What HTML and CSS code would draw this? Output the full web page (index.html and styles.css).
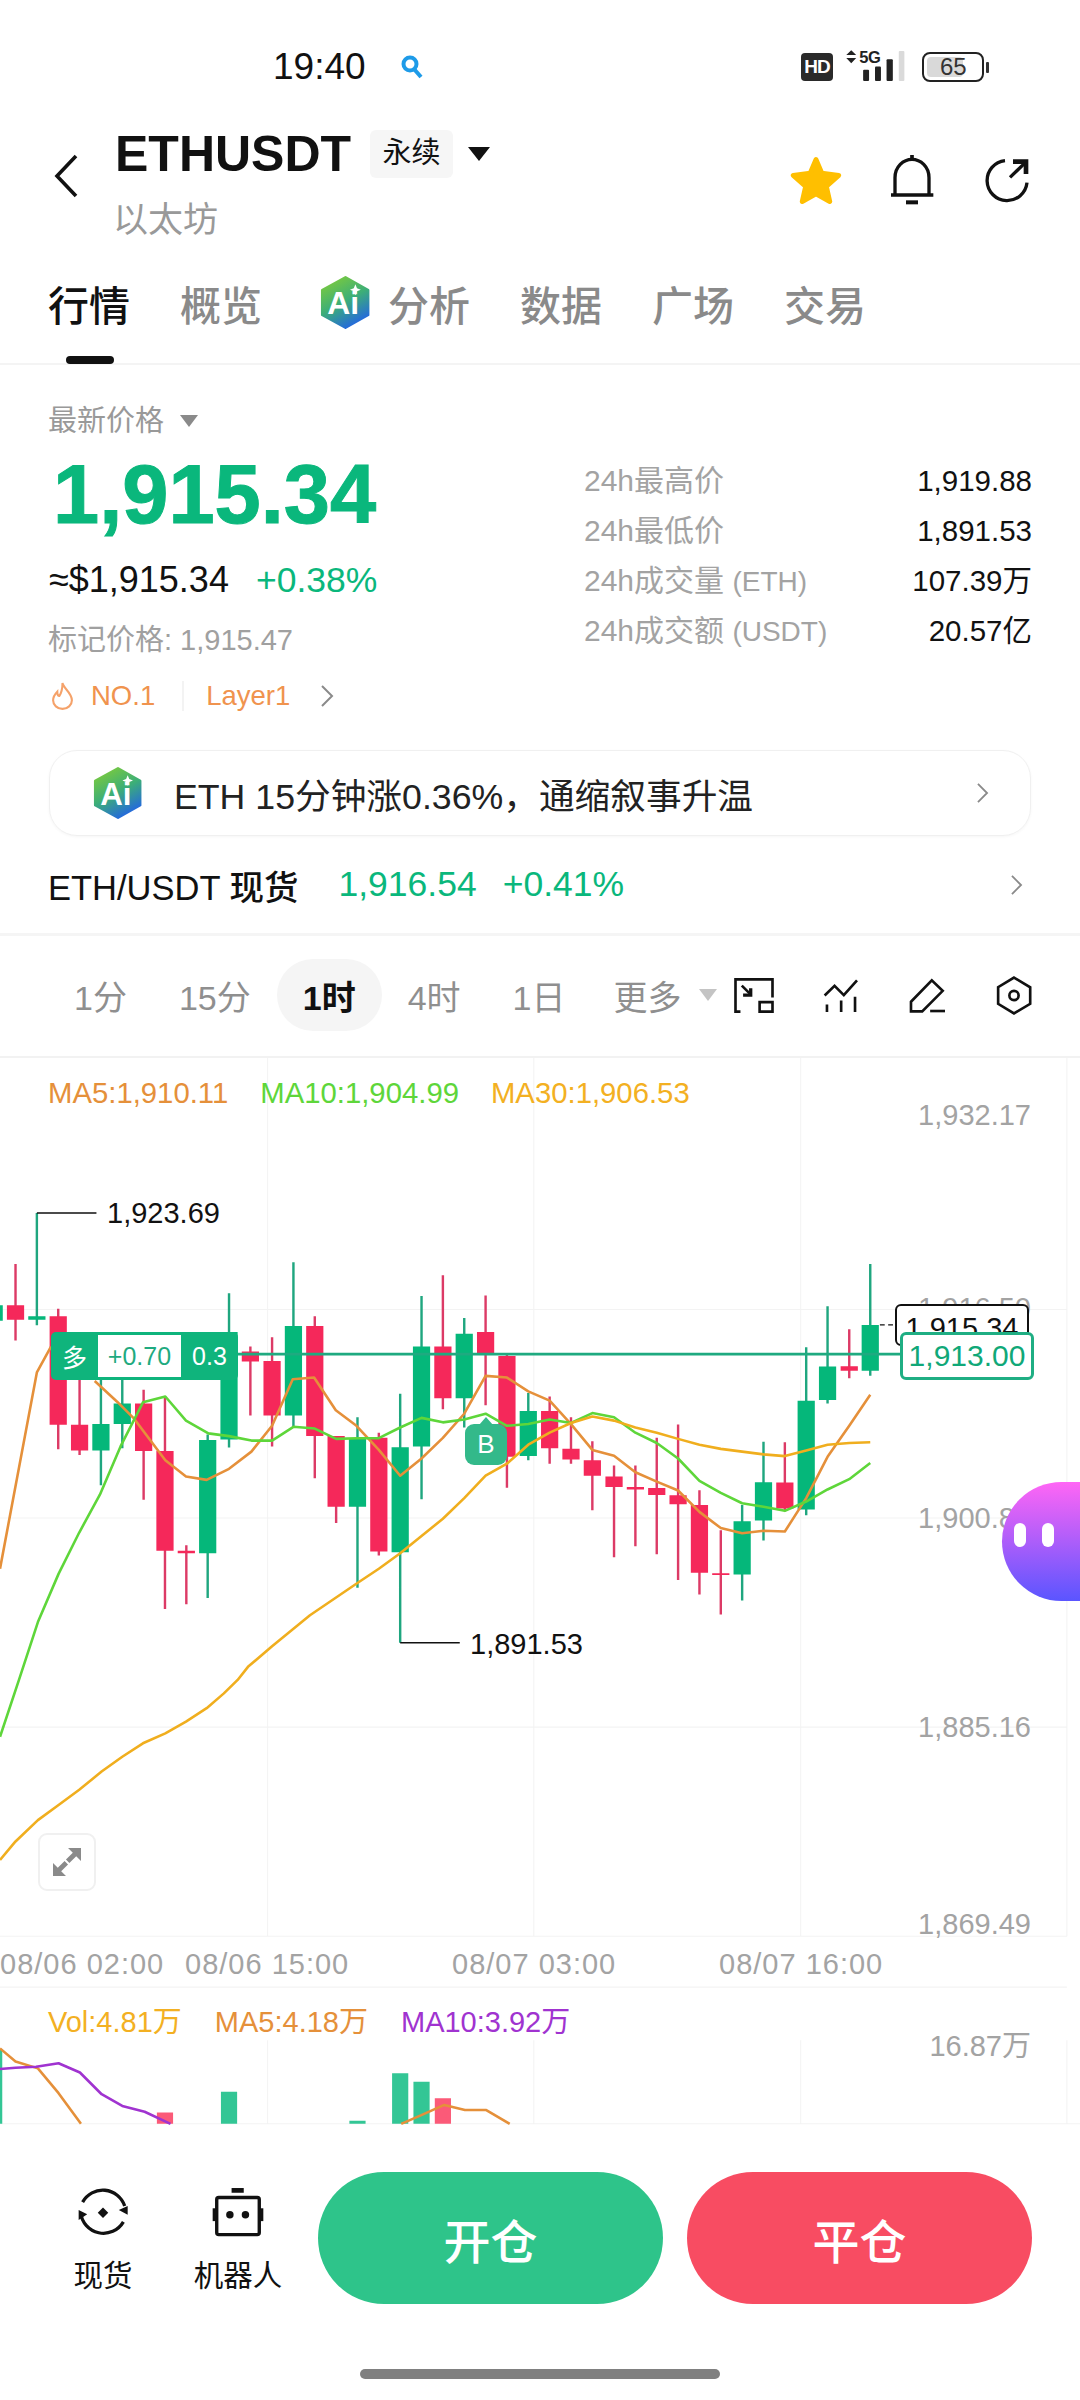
FILE: index.html
```html
<!DOCTYPE html>
<html lang="zh-CN">
<head>
  <meta charset="UTF-8">
  <meta name="viewport" content="width=device-width, initial-scale=1.0">
  <title>ETHUSDT 永续</title>
  <link rel="stylesheet" href="styles.css">
</head>
<body>

  <svg class="defs" width="0" height="0">
    <defs>
      <linearGradient id="aiGrad" x1="0.2" y1="0" x2="0.7" y2="1">
        <stop offset="0" stop-color="#7ccb3c"/>
        <stop offset="0.5" stop-color="#3cae78"/>
        <stop offset="1" stop-color="#2263e6"/>
      </linearGradient>
      <symbol id="aiLogo" viewBox="25 15 160 172">
        <path d="M105 22 176 62V140L105 180 32 140V62Z" fill="url(#aiGrad)" stroke="url(#aiGrad)" stroke-width="8" stroke-linejoin="round"/>
        <text x="98" y="138" class="ai-text">Ai</text>
        <path d="M136 44 141 56 153 61 141 66 136 78 131 66 119 61 131 56Z" fill="#fff"/>
      </symbol>
      <symbol id="chevron" viewBox="0 0 14 22">
        <path d="M2 1 12 11 2 21" fill="none" stroke="#8a8a8a" stroke-width="2"/>
      </symbol>
    </defs>
  </svg>

  <div class="status-bar">
    <span class="clock">19:40</span>
    <svg class="status-search" viewBox="0 0 24 24">
      <circle cx="10" cy="9" r="6.5" fill="none" stroke="#1e9be8" stroke-width="4"/>
      <path d="M14 14 21 22" stroke="#1e9be8" stroke-width="4"/>
    </svg>
    <div class="status-right">
      <span class="hd-badge">HD</span>
      <svg class="signal" viewBox="197 20 177 106">
        <path d="M212 33 227 47H197ZM212 72 197 56H227Z" fill="#222"/>
        <text x="236" y="72" class="signal-text">5G</text>
        <rect x="248" y="92" width="18" height="34" rx="3" fill="#222"/>
        <rect x="284" y="82" width="18" height="44" rx="3" fill="#222"/>
        <rect x="319" y="60" width="19" height="66" rx="3" fill="#222"/>
        <rect x="356" y="35" width="17" height="91" rx="3" fill="#dadada"/>
      </svg>
      <div class="battery">
        <span class="battery-level"></span>
        <span class="battery-num">65</span>
      </div>
      <span class="battery-tip"></span>
    </div>
  </div>

  <div class="header">
    <svg class="back" viewBox="0 0 24 44">
      <path d="M22 2 3 22 22 42" fill="none" stroke="#111" stroke-width="3.6"/>
    </svg>
    <div class="title-block">
      <div class="title-row">
        <span class="symbol">ETHUSDT</span>
        <span class="contract-tag">永续</span>
        <span class="title-caret"></span>
      </div>
      <div class="coin-name">以太坊</div>
    </div>
    <div class="header-actions">
      <svg class="icon-star" viewBox="33 342 150 142">
        <path d="M108 352 125 392 174 398 138 430 148 474 108 452 68 474 78 430 42 398 91 392Z" fill="#ffbf00" stroke="#ffbf00" stroke-width="14" stroke-linejoin="round"/>
      </svg>
      <svg class="icon-bell" viewBox="332 337 128 150">
        <path d="M345 457V405C345 372 370 350 396 350S447 372 447 405V457" fill="none" stroke="#111" stroke-width="10"/>
        <path d="M396 337V352M333 457H460" stroke="#111" stroke-width="11"/>
        <rect x="378" y="473" width="36" height="12" fill="#111"/>
      </svg>
      <svg class="icon-share" viewBox="615 350 138 135">
        <path d="M678 358A60 60 0 1 0 744 424" fill="none" stroke="#111" stroke-width="10"/>
        <path d="M693 408 742 361" fill="none" stroke="#111" stroke-width="10"/>
        <path d="M702 354H748V398L734 398V368H702Z" fill="#111"/>
      </svg>
    </div>
  </div>

  <div class="tabs">
    <span class="tab tab-active">行情</span>
    <span class="tab">概览</span>
    <span class="tab tab-ai"><svg class="ai-icon"><use href="#aiLogo"/></svg>分析</span>
    <span class="tab">数据</span>
    <span class="tab">广场</span>
    <span class="tab">交易</span>
  </div>

  <div class="quote">
    <div class="quote-left">
      <div class="last-label">最新价格<span class="small-caret"></span></div>
      <div class="last-price">1,915.34</div>
      <div class="fiat-row">
        <span class="fiat">≈$1,915.34</span>
        <span class="change">+0.38%</span>
      </div>
      <div class="mark-price">标记价格: 1,915.47</div>
      <div class="rank-row">
        <svg class="fire" viewBox="0 0 22 26" preserveAspectRatio="none">
          <path d="M11 1C12 6 20 10 20 17A9 8 0 0 1 2 17C2 13 4 11 6 9 6 12 7 13 8 13 10 10 11 6 11 1Z" fill="none" stroke="#f5a26a" stroke-width="2"/>
        </svg>
        <span class="rank">NO.1</span>
        <span class="rank-sep"></span>
        <span class="rank rank-layer">Layer1</span>
        <svg class="rank-chevron"><use href="#chevron"/></svg>
      </div>
    </div>
    <div class="stats">
      <div class="stat"><span class="stat-label">24h最高价</span><span class="stat-value">1,919.88</span></div>
      <div class="stat"><span class="stat-label">24h最低价</span><span class="stat-value">1,891.53</span></div>
      <div class="stat"><span class="stat-label">24h成交量 <small>(ETH)</small></span><span class="stat-value">107.39万</span></div>
      <div class="stat"><span class="stat-label">24h成交额 <small>(USDT)</small></span><span class="stat-value">20.57亿</span></div>
    </div>
  </div>

  <div class="ai-card">
    <svg class="ai-card-icon"><use href="#aiLogo"/></svg>
    <span class="ai-card-text">ETH 15分钟涨0.36%，通缩叙事升温</span>
    <svg class="card-chevron"><use href="#chevron"/></svg>
  </div>

  <div class="spot-row">
    <span class="spot-name">ETH/USDT 现货</span>
    <span class="spot-price">1,916.54</span>
    <span class="spot-price spot-change">+0.41%</span>
    <svg class="spot-chevron"><use href="#chevron"/></svg>
  </div>

  <div class="toolbar">
    <span class="interval">1分</span>
    <span class="interval">15分</span>
    <span class="interval interval-active">1时</span>
    <span class="interval">4时</span>
    <span class="interval">1日</span>
    <span class="interval interval-more">更多<i class="more-caret"></i></span>
    <div class="tools">
      <svg class="tool tool-frame" viewBox="36 38 126 112">
        <path d="M58 143H43V45H155V100M155 143H116V114H155V143Z" fill="none" stroke="#111" stroke-width="8"/>
        <path d="M62 64 88 90" stroke="#111" stroke-width="8"/>
        <path d="M94 72V98H66V88H84V72Z" fill="#111"/>
      </svg>
      <svg class="tool tool-index" viewBox="303 40 110 106">
        <path d="M310 93 340 64 368 92 408 47" fill="none" stroke="#111" stroke-width="8"/>
        <path d="M317 120V143M360 108V143M402 97V143" stroke="#111" stroke-width="8"/>
      </svg>
      <svg class="tool tool-pencil" viewBox="566 38 112 106">
        <path d="M572 110 635 45 668 77 606 139H572Z" fill="none" stroke="#111" stroke-width="8"/>
        <path d="M630 138H675" stroke="#111" stroke-width="8"/>
      </svg>
      <svg class="tool tool-gear" viewBox="828 37 108 118">
        <path d="M882 42 931 71V121L882 150 834 121V71Z" fill="none" stroke="#111" stroke-width="8"/>
        <circle cx="882" cy="96" r="14" fill="none" stroke="#111" stroke-width="8"/>
      </svg>
    </div>
  </div>

  <div class="chart">
    <svg class="plot" viewBox="0 -238 3136 3110">
      <path class="grid" d="M777 -238V2312M1550 -238V2312M2325 -238V2312M3098 -238V2312M0 492H3098M0 1098H3098M0 1705H3098M0 2312H3098M0 2460H3098M777 2614V2857M1550 2614V2857M2325 2614V2857M3098 2614V2857M0 2857H3136"/>

      <path class="wick-red" d="M45 360V582M169 490V898M231 650V915M417 725V1045M479 745V1362M541 1177V1348M727 600V800M790 573V890M914 512V982M976 860V1112M1100 850V1207M1286 393V782M1410 452V770M1472 620V1010M1596 745V940M1658 805V940M1720 875V1075M1783 945V1212M1845 945V1180M1907 865V1203M1969 826V1278M2031 1017V1320M2093 1133V1378M2279 878V1078M2466 550V692"/>
      <path class="body-red" d="M45 480V522M169 512V827M231 827V902M417 765V903M479 903V1193M541 1193V1200M727 614V643M790 642V800M914 540V860M976 860V1065M1100 865V1195M1286 600V750M1410 558V620M1472 627V920M1596 787V895M1658 897V928M1720 930V975M1783 977V1008M1845 1008V1015M1907 1011V1031M1969 1032V1058M2031 1060V1257M2093 1258V1263M2279 995V1070M2466 657V670"/>
      <path class="wick-green" d="M107 212V538M293 690V1003M355 690V895M603 855V1330M665 445V893M852 355V835M1038 805V1300M1162 737V1460M1224 453V1043M1348 517V835M1534 735V930M2155 1060V1337M2217 876V1163M2341 602V1090M2403 483V765M2527 360V685"/>
      <path class="body-green" d="M-17 480V525M107 512V522M293 825V902M355 765V825M603 871V1200M665 558V870M852 540V800M1038 868V1065M1162 892V1197M1224 600V890M1348 563V750M1534 787V918M2155 1107V1262M2217 994V1105M2341 757V1073M2403 658V755M2527 537V670"/>

      <path class="order-line" d="M690 622H2640"/>
      <path class="peak-line" d="M107 212H280M1162 1460H1335"/>
      <path class="last-dash" d="M2555 537H2610"/>

      <path class="ma ma5" d="M0 1245 107 675 148 600M275 700 340 760 390 810 480 930 540 977 600 987 665 955 730 905 790 830 850 695 912 690 975 785 1035 830 1100 900 1162 975 1224 925 1286 865 1348 795 1410 685 1472 690 1534 730 1596 757 1658 825 1720 900 1783 917 1845 965 1907 992 1969 1018 2031 1080 2093 1127 2155 1142 2217 1135 2279 1137 2341 1040 2403 920 2466 830 2527 740"/>
      <path class="ma ma10" d="M0 1733 55 1568 110 1400 170 1260 230 1140 290 1030 350 890 415 762 480 745 540 815 605 852 665 860 730 873 790 873 852 833 914 838 976 868 1038 866 1100 866 1162 835 1224 807 1286 820 1348 812 1410 795 1472 830 1534 825 1596 812 1658 822 1720 793 1783 805 1845 850 1907 880 1969 925 2031 990 2093 1025 2155 1055 2217 1065 2279 1077 2341 1050 2403 1015 2466 985 2527 938"/>
      <path class="ma ma30" d="M0 2091 45 2037 110 1975 170 1931 230 1887 295 1834 355 1791 415 1752 480 1723 540 1689 600 1650 650 1607 690 1568 720 1530 790 1470 900 1380 1040 1285 1100 1245 1162 1200 1224 1150 1286 1100 1348 1040 1410 975 1472 940 1534 885 1596 850 1658 822 1720 803 1783 815 1845 835 1907 850 1969 868 2031 885 2093 897 2155 905 2217 913 2279 918 2341 902 2403 885 2466 880 2527 878"/>

      <path class="vol-green" d="M-17 2642V2857M665 2764V2857M1038 2848V2857M1162 2710V2857M1224 2735V2857"/>
      <path class="vol-red" d="M479 2824V2857M1286 2783V2857"/>
      <path class="ma vol-ma5" d="M0 2638 45 2676 110 2696 170 2768 235 2857M1165 2857 1225 2831 1290 2802 1350 2817 1412 2817 1480 2857"/>
      <path class="ma vol-ma10" d="M0 2698 45 2694 105 2691 170 2681 232 2708 295 2771 355 2805 420 2822 495 2857"/>
    </svg>

    <div class="ma-legend">
      <span class="leg-ma5">MA5:1,910.11</span>
      <span class="leg-ma10">MA10:1,904.99</span>
      <span class="leg-ma30">MA30:1,906.53</span>
    </div>

    <span class="axis-label axis-1">1,932.17</span>
    <span class="axis-label axis-2">1,916.50</span>
    <span class="axis-label axis-3">1,900.83</span>
    <span class="axis-label axis-4">1,885.16</span>
    <span class="axis-label axis-5">1,869.49</span>

    <span class="peak-label peak-high">1,923.69</span>
    <span class="peak-label peak-low">1,891.53</span>

    <div class="order-tag">
      <span class="order-side">多</span>
      <span class="order-pnl">+0.70</span>
      <span class="order-qty">0.3</span>
    </div>

    <div class="buy-mark">B</div>

    <span class="price-tag">1,915.34</span>
    <span class="order-price">1,913.00</span>

    <div class="assistant"><i></i><i></i></div>

    <div class="expand">
      <svg viewBox="150 505 82 82">
        <path d="M232 505V543L218 529 198 549 188 539 208 519 194 505ZM150 587V549L164 563 184 543 194 553 174 573 188 587Z" fill="#8a8a8a"/>
      </svg>
    </div>

    <div class="time-axis">
      <span class="time-1">08/06 02:00</span>
      <span class="time-2">08/06 15:00</span>
      <span class="time-3">08/07 03:00</span>
      <span class="time-4">08/07 16:00</span>
    </div>

    <div class="vol-legend">
      <span class="leg-ma30">Vol:4.81万</span>
      <span class="leg-ma5">MA5:4.18万</span>
      <span class="leg-vol10">MA10:3.92万</span>
    </div>
    <span class="axis-label axis-vol">16.87万</span>
  </div>

  <div class="bottom-bar">
    <div class="bottom-row">
      <div class="nav-item nav-spot">
        <svg class="nav-icon" viewBox="52 42 152 152">
          <path d="M66 88A70 70 0 0 1 194 100" fill="none" stroke="#111" stroke-width="10"/>
          <path d="M190 148A70 70 0 0 1 60 120" fill="none" stroke="#111" stroke-width="10"/>
          <path d="M176 112 203 100V126ZM54 112 80 125 54 142Z" fill="#111"/>
          <path d="M128 104 144 120 128 136 112 120Z" fill="#111"/>
        </svg>
        <span class="nav-label">现货</span>
      </div>
      <div class="nav-item nav-bot">
        <svg class="nav-icon" viewBox="458 46 154 146">
          <rect x="472" y="76" width="126" height="110" rx="6" fill="none" stroke="#111" stroke-width="10"/>
          <rect x="460" y="108" width="12" height="38" fill="#111"/>
          <rect x="598" y="108" width="12" height="38" fill="#111"/>
          <rect x="516" y="48" width="36" height="14" fill="#111"/>
          <circle cx="511" cy="127" r="11" fill="#111"/>
          <circle cx="557" cy="127" r="11" fill="#111"/>
        </svg>
        <span class="nav-label">机器人</span>
      </div>
      <button class="trade-btn btn-open">开仓</button>
      <button class="trade-btn btn-close">平仓</button>
    </div>
    <div class="home-bar"></div>
  </div>

</body>
</html>
```

FILE: styles.css
```css
* {
  box-sizing: border-box;
}

body {
  margin: 0;
  width: 1080px;
  height: 2400px;
  overflow: hidden;
  background-color: #fff;
  color: #111;
  font-family: "Liberation Sans", "Noto Sans CJK SC", sans-serif;
}

.defs {
  position: absolute;
}

.ai-text {
  font-family: "Liberation Sans", sans-serif;
  font-size: 100px;
  font-weight: 700;
  fill: #fff;
  text-anchor: middle;
}

/* status bar */
.status-bar {
  display: flex;
  align-items: center;
  height: 104px;
  padding: 34px 91px 4px 273px;
}

.clock {
  font-size: 37px;
  line-height: 40px;
}

.status-search {
  width: 24px;
  height: 24px;
  margin-left: 34px;
}

.status-right {
  display: flex;
  align-items: center;
  margin-left: auto;
}

.hd-badge {
  width: 32px;
  height: 28px;
  border-radius: 4px;
  background-color: #2a2a2a;
  color: #fff;
  font-size: 19px;
  font-weight: 700;
  line-height: 28px;
  text-align: center;
  letter-spacing: -1px;
}

.signal {
  width: 59px;
  height: 35px;
  margin-left: 13px;
  margin-top: -7px;
}

.signal-text {
  font-size: 50px;
  font-weight: 700;
  fill: #222;
  letter-spacing: -1px;
}

.battery {
  position: relative;
  width: 62px;
  height: 30px;
  margin-left: 17px;
  border: 2px solid #222;
  border-radius: 8px;
  padding: 3px;
}

.battery-level {
  display: block;
  width: 36px;
  height: 100%;
  border-radius: 4px;
  background-color: #d9d9d9;
}

.battery-num {
  position: absolute;
  left: 16px;
  top: 0;
  font-size: 24px;
  line-height: 26px;
  color: #333;
}

.battery-tip {
  width: 3px;
  height: 11px;
  margin-left: 2px;
  background-color: #333;
  border-radius: 1px;
}

/* header */
.header {
  display: flex;
  align-items: center;
  height: 136px;
  padding: 0 50px 0 54px;
}

.back {
  width: 24px;
  height: 44px;
  margin-top: 8px;
  margin-right: 37px;
}

.title-block {
  padding-top: 22px;
}

.title-row {
  display: flex;
  align-items: center;
  height: 60px;
}

.symbol {
  font-size: 50px;
  font-weight: 700;
  line-height: 60px;
}

.contract-tag {
  width: 83px;
  height: 48px;
  margin-left: 19px;
  border-radius: 6px;
  background-color: #f6f6f6;
  font-size: 29px;
  line-height: 46px;
  text-align: center;
}

.title-caret {
  width: 0;
  height: 0;
  margin-left: 15px;
  border-left: 11px solid transparent;
  border-right: 11px solid transparent;
  border-top: 14px solid #111;
}

.coin-name {
  margin-top: 14px;
  margin-left: -2px;
  font-size: 35px;
  line-height: 44px;
  color: #999;
}

.header-actions {
  display: flex;
  align-items: center;
  margin-left: auto;
  padding-top: 16px;
}

.icon-star {
  width: 52px;
  height: 49px;
}

.icon-bell {
  width: 44px;
  height: 50px;
  margin-left: 48px;
}

.icon-share {
  width: 46px;
  height: 45px;
  margin-left: 50px;
}

/* tabs */
.tabs {
  display: flex;
  align-items: center;
  height: 125px;
  padding: 2px 0 0 48px;
  gap: 50px;
  border-bottom: 2px solid #f4f4f4;
}

.tab {
  position: relative;
  display: flex;
  align-items: center;
  font-size: 41px;
  font-weight: 500;
  color: #8a8a8a;
}

.tab-active {
  color: #111;
}

.tab-active::after {
  content: "";
  position: absolute;
  left: 18px;
  bottom: -31px;
  width: 48px;
  height: 8px;
  border-radius: 4px;
  background-color: #111;
}

.tab-ai {
  gap: 17px;
  margin-left: 8px;
}

.ai-icon {
  width: 51px;
  height: 55px;
}

/* quote */
.quote {
  display: flex;
  justify-content: space-between;
  padding: 36px 48px 0 48px;
}

.last-label {
  display: flex;
  align-items: center;
  font-size: 29px;
  line-height: 40px;
  color: #999;
}

.small-caret {
  width: 0;
  height: 0;
  margin-left: 16px;
  border-left: 9px solid transparent;
  border-right: 9px solid transparent;
  border-top: 12px solid #8a8a8a;
}

.last-price {
  margin-top: 6px;
  margin-left: 5px;
  font-size: 83px;
  font-weight: 700;
  line-height: 96px;
  color: #0ab77c;
  -webkit-text-stroke: 1px #0ab77c;
}

.fiat-row {
  display: flex;
  gap: 27px;
  margin-top: 15px;
  margin-left: 1px;
  line-height: 44px;
}

.fiat {
  font-size: 36px;
}

.change {
  font-size: 35.5px;
  color: #0ab77c;
}

.mark-price {
  margin-top: 18px;
  font-size: 29px;
  line-height: 40px;
  color: #a0a0a0;
}

.rank-row {
  display: flex;
  align-items: center;
  height: 40px;
  margin-top: 16px;
  padding-left: 3px;
}

.fire {
  width: 23px;
  height: 28px;
}

.rank {
  margin-left: 17px;
  font-size: 27.5px;
  color: #f0934e;
}

.rank-layer {
  margin-left: 22px;
}

.rank-sep {
  width: 2px;
  height: 30px;
  margin-left: 27px;
  background-color: #f3f3f3;
}

.rank-chevron {
  width: 14px;
  height: 22px;
  margin-left: 30px;
}

.stats {
  width: 448px;
  margin-top: 55px;
}

.stat {
  display: flex;
  justify-content: space-between;
  height: 50px;
  line-height: 50px;
}

.stat-label {
  font-size: 30px;
  color: #a3a3a3;
}

.stat-label small {
  font-size: 28px;
}

.stat-value {
  font-size: 29.5px;
}

/* ai card */
.ai-card {
  display: flex;
  align-items: center;
  height: 86px;
  margin: 34px 49px 0;
  padding: 0 41px 0 43px;
  border: 1px solid #f0f0f0;
  border-radius: 28px;
  box-shadow: 0 1px 3px rgba(0, 0, 0, 0.04);
}

.ai-card-icon {
  width: 50px;
  height: 54px;
}

.ai-card-text {
  margin-left: 31px;
  font-size: 35.7px;
  color: #222;
}

.card-chevron {
  width: 13px;
  height: 20px;
  margin-left: auto;
}

/* spot row */
.spot-row {
  display: flex;
  align-items: center;
  height: 100px;
  padding: 0 57px 0 48px;
  border-bottom: 3px solid #f5f5f5;
}

.spot-name {
  font-size: 34.5px;
  font-weight: 500;
}

.spot-price {
  margin-left: 40px;
  font-size: 35.5px;
  color: #0ab77c;
}

.spot-change {
  margin-left: 26px;
}

.spot-chevron {
  width: 13px;
  height: 20px;
  margin-left: auto;
}

/* interval toolbar */
.toolbar {
  display: flex;
  align-items: center;
  height: 122px;
  padding: 24px 48px 26px 48px;
  border-bottom: 2px solid #f2f2f2;
}

.interval {
  display: flex;
  align-items: center;
  height: 72px;
  padding: 0 26px;
  border-radius: 36px;
  font-size: 34px;
  color: #8f8f8f;
}

.interval-active {
  background-color: #f5f5f5;
  color: #111;
  font-weight: 700;
}

.interval-more {
  padding-right: 0;
  margin-left: -4px;
}

.more-caret {
  width: 0;
  height: 0;
  margin-left: 17px;
  border-left: 9px solid transparent;
  border-right: 9px solid transparent;
  border-top: 12px solid #c4c4c4;
}

.tools {
  display: flex;
  align-items: center;
  gap: 50px;
  margin-left: auto;
}

.tool-frame {
  width: 42px;
  height: 37px;
  margin-right: -3px;
}

.tool-index {
  width: 37px;
  height: 35px;
}

.tool-pencil {
  width: 37px;
  height: 35px;
}

.tool-gear {
  width: 36px;
  height: 39px;
}

/* chart */
.chart {
  position: relative;
  height: 1068px;
  overflow: hidden;
}

.plot {
  position: absolute;
  left: 0;
  top: 0;
  width: 1080px;
  height: 1071px;
}

.plot path {
  fill: none;
}

.grid {
  stroke: #f3f3f3;
  stroke-width: 3;
}

.wick-red {
  stroke: #dc3a66;
  stroke-width: 7;
}

.body-red {
  stroke: #f5285a;
  stroke-width: 50;
}

.wick-green {
  stroke: #1fa67f;
  stroke-width: 7;
}

.body-green {
  stroke: #05b77a;
  stroke-width: 50;
}

.order-line {
  stroke: #1faa80;
  stroke-width: 8;
}

.peak-line {
  stroke: #111;
  stroke-width: 4;
}

.last-dash {
  stroke: #111;
  stroke-width: 3;
  stroke-dasharray: 14 10;
}

.ma {
  stroke-width: 7.5;
  stroke-linejoin: round;
}

.ma5 {
  stroke: #e5903a;
}

.ma10 {
  stroke: #5ed63a;
}

.ma30 {
  stroke: #f0ae1e;
}

.vol-green {
  stroke: #33c695;
  stroke-width: 47;
}

.vol-red {
  stroke: #fb5a78;
  stroke-width: 47;
}

.vol-ma5 {
  stroke: #e5903a;
}

.vol-ma10 {
  stroke: #a033d0;
}

.ma-legend,
.vol-legend {
  position: absolute;
  display: flex;
  font-size: 29.3px;
  line-height: 34px;
}

.ma-legend {
  left: 48px;
  top: 18px;
  gap: 32px;
}

.vol-legend {
  left: 48px;
  top: 947px;
  gap: 33px;
  font-size: 29px;
}

.leg-ma5 {
  color: #e5903a;
}

.leg-ma10 {
  color: #5ed63a;
}

.leg-ma30 {
  color: #f3b022;
}

.leg-vol10 {
  color: #a033d0;
}

.axis-label {
  position: absolute;
  right: 49px;
  font-size: 29px;
  line-height: 34px;
  color: #a3a3a3;
}

.axis-1 {
  top: 40px;
}

.axis-2 {
  top: 233px;
}

.axis-3 {
  top: 443px;
}

.axis-4 {
  top: 652px;
}

.axis-5 {
  top: 849px;
}

.axis-vol {
  top: 971px;
}

.peak-label {
  position: absolute;
  font-size: 29px;
  line-height: 34px;
  color: #111;
}

.peak-high {
  left: 107px;
  top: 138px;
}

.peak-low {
  left: 470px;
  top: 569px;
}

.order-tag {
  position: absolute;
  left: 51px;
  top: 274px;
  display: flex;
  align-items: center;
  width: 187px;
  height: 48px;
  border-radius: 5px;
  background-color: #0fb47c;
  color: #fff;
  font-size: 25px;
}

.order-side {
  width: 47px;
  text-align: center;
}

.order-pnl {
  width: 83px;
  height: 42px;
  background-color: #fff;
  color: #1faa80;
  line-height: 42px;
  text-align: center;
}

.order-qty {
  width: 57px;
  text-align: center;
}

.buy-mark {
  position: absolute;
  left: 465px;
  top: 366px;
  width: 42px;
  height: 41px;
  border-radius: 9px;
  background-color: #33b98a;
  color: #fff;
  font-size: 26px;
  line-height: 41px;
  text-align: center;
}

.buy-mark::before {
  content: "";
  position: absolute;
  left: 14px;
  top: -7px;
  border-left: 7px solid transparent;
  border-right: 7px solid transparent;
  border-bottom: 8px solid #33b98a;
}

.price-tag {
  position: absolute;
  left: 895px;
  top: 246px;
  width: 134px;
  height: 42px;
  border: 2px solid #111;
  border-radius: 6px;
  background-color: #fff;
  font-size: 29px;
  line-height: 36px;
  text-align: center;
  padding-top: 4px;
}

.order-price {
  position: absolute;
  left: 900px;
  top: 274px;
  width: 134px;
  height: 48px;
  border: 3px solid #1fae83;
  border-radius: 6px;
  background-color: #fff;
  color: #10a878;
  font-size: 30px;
  line-height: 42px;
  text-align: center;
}

.assistant {
  position: absolute;
  left: 1002px;
  top: 424px;
  display: flex;
  align-items: center;
  gap: 16px;
  width: 78px;
  height: 119px;
  padding: 0 0 14px 12px;
  border-radius: 60px 0 0 60px;
  background: linear-gradient(#ff66f5, #5a55ff);
}

.assistant i {
  width: 12px;
  height: 24px;
  border-radius: 6px;
  background-color: #fff;
}

.expand {
  position: absolute;
  left: 38px;
  top: 775px;
  display: flex;
  align-items: center;
  justify-content: center;
  width: 58px;
  height: 58px;
  border: 2px solid #f0f0f0;
  border-radius: 9px;
  background-color: #fff;
}

.expand svg {
  width: 28px;
  height: 28px;
}

.time-axis span {
  position: absolute;
  top: 889px;
  font-size: 29px;
  line-height: 34px;
  letter-spacing: 1px;
  white-space: nowrap;
  color: #a3a3a3;
}

.time-1 {
  left: 0;
}

.time-2 {
  left: 185px;
}

.time-3 {
  left: 452px;
}

.time-4 {
  left: 719px;
}

/* bottom bar */
.bottom-bar {
  height: 274px;
  padding-top: 46px;
}

.bottom-row {
  display: flex;
  align-items: flex-start;
  padding: 0 48px 0 74px;
}

.nav-item {
  display: flex;
  flex-direction: column;
  align-items: center;
  padding-top: 15px;
}

.nav-spot {
  width: 58px;
  margin-right: 62px;
}

.nav-bot {
  width: 88px;
  margin-right: 36px;
}

.nav-icon {
  width: 52px;
  height: 50px;
}

.nav-label {
  margin-top: 19px;
  font-size: 29.5px;
  line-height: 40px;
  white-space: nowrap;
}

.trade-btn {
  width: 345px;
  height: 132px;
  border: none;
  border-radius: 66px;
  color: #fff;
  font-family: inherit;
  font-size: 47px;
  font-weight: 500;
}

.btn-open {
  background-color: #2ec48a;
}

.btn-close {
  margin-left: 24px;
  background-color: #f84c62;
}

.home-bar {
  width: 360px;
  height: 10px;
  margin: 65px auto 0;
  border-radius: 5px;
  background-color: #808080;
}
```
